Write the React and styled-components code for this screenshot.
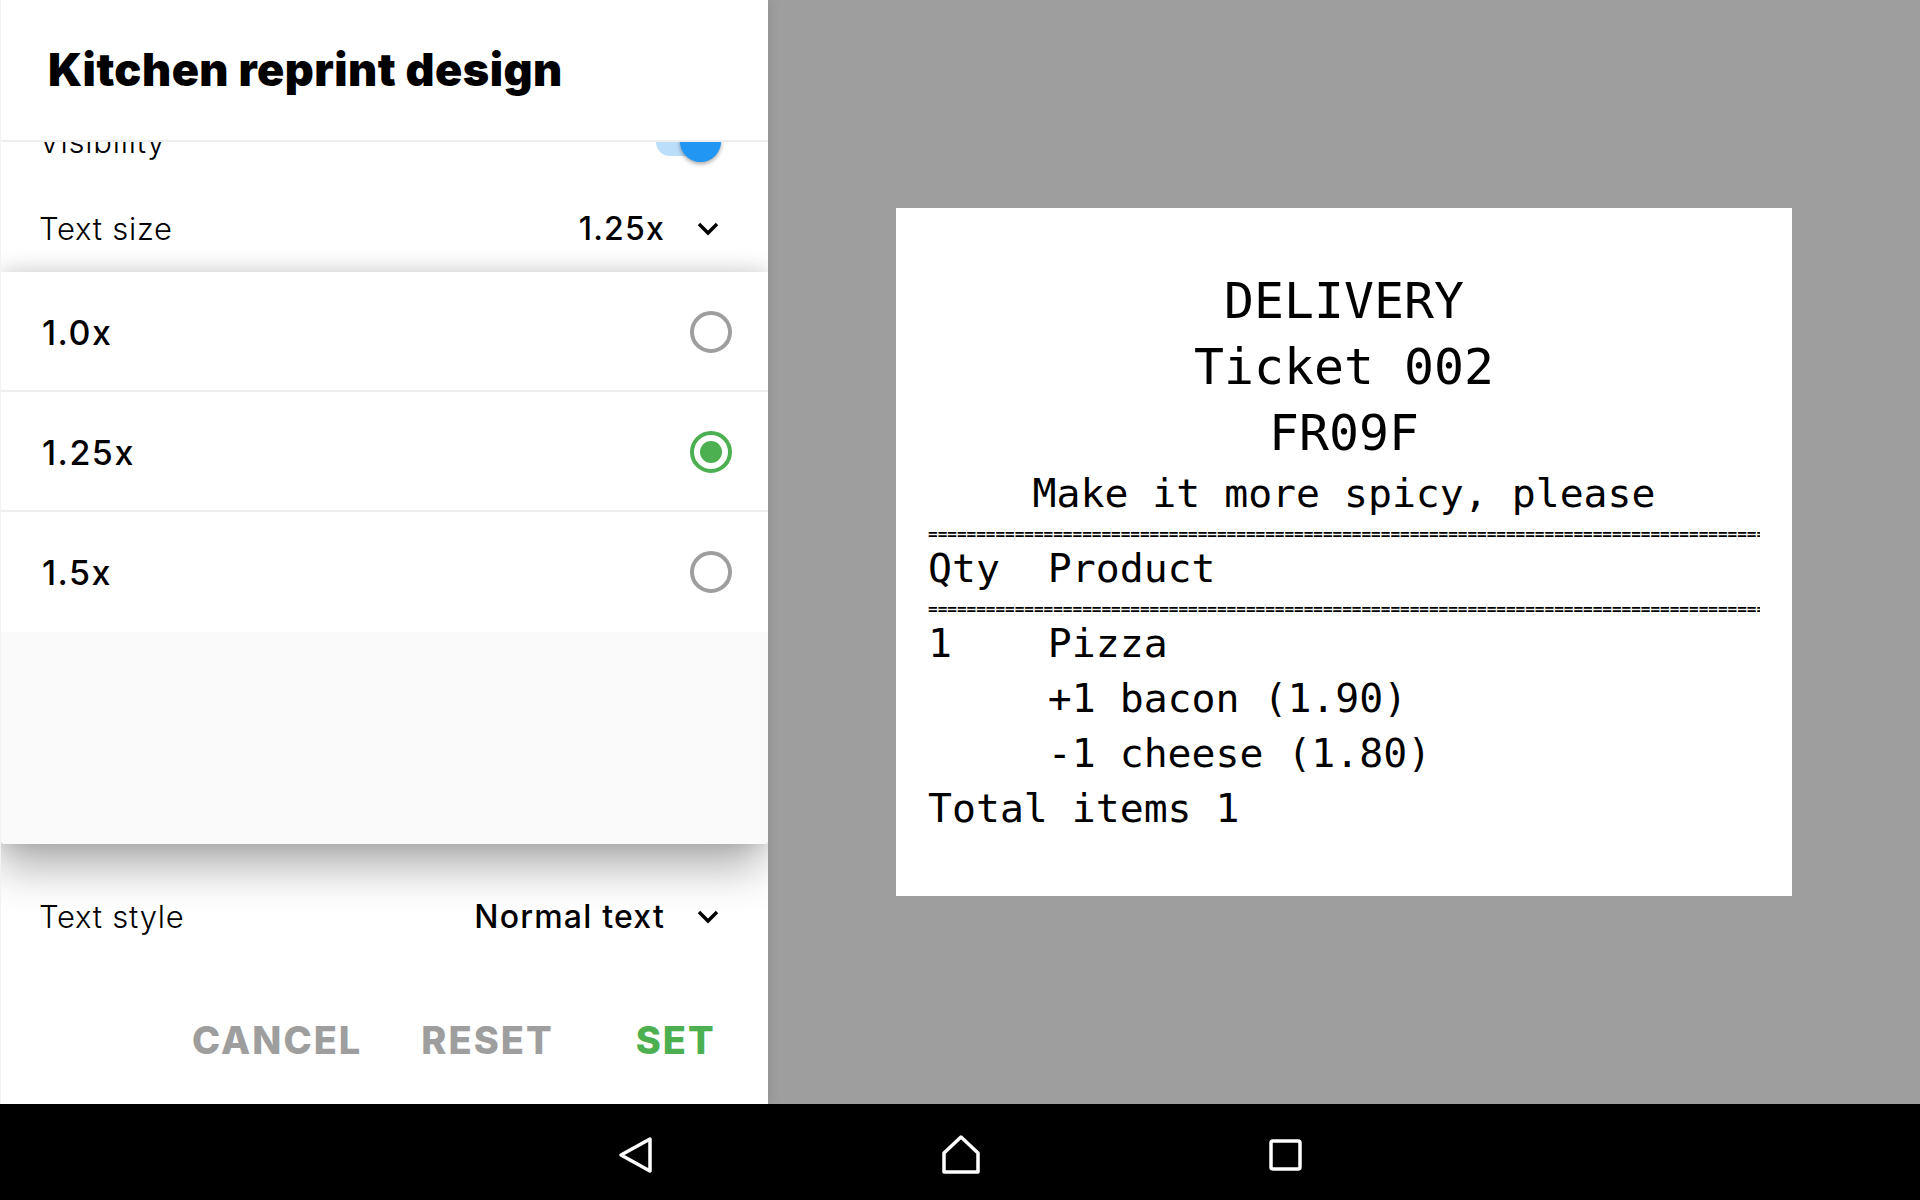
import React from 'react';
import styled, { createGlobalStyle } from 'styled-components';

const colorGray = "#9e9e9e";
const colorGreen = "#4caf50";
const colorBlue = "#2196f3";
const colorLine = "#eeeeee";

const GlobalStyle = createGlobalStyle`
  html, body {
    margin: 0;
    padding: 0;
    background: #000;
  }
  * {
    box-sizing: border-box;
  }
`;

const Screen = styled.div`
  width: 1920px;
  height: 1200px;
  display: flex;
  flex-direction: column;
  font-family: Inter, "Liberation Sans", sans-serif;
  color: #000;
  overflow: hidden;
`;

const Main = styled.main`
  height: 1104px;
  display: flex;
  background-color: ${colorGray};
`;

const Panel = styled.aside`
  width: 768px;
  display: flex;
  flex-direction: column;
  background-color: #fff;
  border-left: 1px solid #f2f2f2;
  box-shadow: 0 0 12px rgba(0, 0, 0, 0.12);
  position: relative;
  z-index: 1;
`;

const Header = styled.header`
  height: 142px;
  flex: none;
  display: flex;
  align-items: center;
  padding: 0 0 2px 47px;
  background-color: #fff;
  border-bottom: 2px solid ${colorLine};
  position: relative;
  z-index: 2;
`;

const Title = styled.h1`
  margin: 0;
  font-size: 45px;
  font-weight: 900;
  letter-spacing: 0.45px;
`;

const Body = styled.div`
  flex: 1;
  min-height: 0;
  overflow: hidden;
`;

const Row = styled.div`
  height: 87px;
  display: flex;
  align-items: center;
  justify-content: space-between;
  padding: 0 49px 0 38px;
  font-size: 31px;
  font-weight: 300;
  letter-spacing: 0.75px;
  margin-top: ${props => props.$offset || 0}px;
`;

const Value = styled.div`
  display: flex;
  align-items: center;
  gap: 32px;
  font-size: 32px;
  font-weight: 500;
  letter-spacing: 1.2px;
`;

const Toggle = styled.span`
  width: 65px;
  height: 28px;
  margin-right: -2px;
  border-radius: 14px;
  background-color: #bbdefb;
  position: relative;
`;

const Thumb = styled.span`
  position: absolute;
  top: -7px;
  right: 0;
  width: 41px;
  height: 41px;
  border-radius: 50%;
  background-color: ${colorBlue};
  box-shadow: 0 2px 4px rgba(0, 0, 0, 0.35);
`;

const Sheet = styled.div`
  height: 572px;
  display: flex;
  flex-direction: column;
  background-color: #fafafa;
  border-radius: 0 0 3px 3px;
  position: relative;
  box-shadow: -4px 26px 44px -2px rgba(0, 0, 0, 0.3), 0 -2px 22px rgba(0, 0, 0, 0.16);
`;

const Option = styled.div`
  height: 120px;
  display: flex;
  align-items: center;
  justify-content: space-between;
  padding: ${props => props.$last ? "0" : "2px"} 36px 0 41px;
  background-color: #fff;
  border-bottom: ${props => props.$last ? "none" : `2px solid ${colorLine}`};
  font-size: 34px;
  font-weight: 500;
  letter-spacing: 1.5px;
`;

const Radio = styled.span`
  width: 42px;
  height: 42px;
  border-radius: 50%;
  border: 4px solid ${props => props.$checked ? colorGreen : colorGray};
  display: flex;
  align-items: center;
  justify-content: center;

  &::after {
    content: "";
    display: ${props => props.$checked ? "block" : "none"};
    width: 22px;
    height: 22px;
    border-radius: 50%;
    background-color: ${colorGreen};
  }
`;

const Footer = styled.footer`
  height: 128px;
  flex: none;
  display: flex;
  align-items: center;
  padding-left: 191px;
`;

const Action = styled.button`
  padding: 0;
  border: none;
  background: none;
  font-family: inherit;
  font-size: 38px;
  font-weight: 800;
  letter-spacing: 2px;
  color: ${props => props.$primary ? colorGreen : colorGray};
  margin-right: ${props => props.$gap}px;
`;

const Preview = styled.section`
  flex: 1;
  display: flex;
  align-items: center;
  justify-content: center;
`;

const Receipt = styled.div`
  width: 896px;
  height: 688px;
  padding: 60px 32px 0;
  background-color: #fff;
  font-family: "DejaVu Sans Mono", monospace;
  white-space: pre;
`;

const BigLine = styled.div`
  font-size: 49.8px;
  line-height: 66px;
  text-align: center;
`;

const Note = styled.div`
  font-size: 39.8px;
  line-height: 55px;
  text-align: center;
`;

const Line = styled.div`
  font-size: 39.8px;
  line-height: 55px;
`;

const Rule = styled.div`
  height: 20px;
  font-size: 16px;
  font-weight: 700;
  line-height: 25px;
  overflow: hidden;
`;

const NavBar = styled.nav`
  height: 96px;
  flex: none;
  display: flex;
  align-items: center;
  justify-content: center;
  gap: 285px;
  padding-top: 6px;
  background-color: #000;
`;

const NavIcon = styled.svg`
  width: 40px;
  height: 40px;
  fill: none;
  stroke: #fff;
  stroke-width: 3.5;
  stroke-linejoin: round;
`;

const Chevron = () => (
  <svg width="22" height="14" viewBox="0 0 22 14" fill="none" stroke="#000" strokeWidth="3.4">
    <path d="M2 2 L11 11 L20 2" />
  </svg>
);

const RULE = "=".repeat(90);
const OPTIONS = ["1.0x", "1.25x", "1.5x"];

function App() {
  return (
    <Screen>
      <GlobalStyle />
      <Main>
        <Panel>
          <Header>
            <Title>Kitchen reprint design</Title>
          </Header>
          <Body>
            <Row $offset={-44}>
              Visibility
              <Toggle><Thumb /></Toggle>
            </Row>
            <Row>
              Text size
              <Value>1.25x <Chevron /></Value>
            </Row>
            <Sheet>
              {OPTIONS.map((option, i) => (
                <Option key={option} $last={i === OPTIONS.length - 1}>
                  {option}
                  <Radio $checked={option === "1.25x"} />
                </Option>
              ))}
            </Sheet>
            <Row $offset={29}>
              Text style
              <Value>Normal text <Chevron /></Value>
            </Row>
          </Body>
          <Footer>
            <Action $gap={59}>CANCEL</Action>
            <Action $gap={82}>RESET</Action>
            <Action $primary>SET</Action>
          </Footer>
        </Panel>
        <Preview>
          <Receipt>
            <BigLine>DELIVERY</BigLine>
            <BigLine>Ticket 002</BigLine>
            <BigLine>FR09F</BigLine>
            <Note>Make it more spicy, please</Note>
            <Rule>{RULE}</Rule>
            <Line>{"Qty  Product"}</Line>
            <Rule>{RULE}</Rule>
            <Line>{"1    Pizza"}</Line>
            <Line>{"     +1 bacon (1.90)"}</Line>
            <Line>{"     -1 cheese (1.80)"}</Line>
            <Line>{"Total items 1"}</Line>
          </Receipt>
        </Preview>
      </Main>
      <NavBar>
        <NavIcon viewBox="0 0 40 40"><path d="M35 4 L6 20 L35 36 Z" /></NavIcon>
        <NavIcon viewBox="0 0 40 40"><path d="M21 2 L38 18 L38 37 L4 37 L4 18 Z" /></NavIcon>
        <NavIcon viewBox="0 0 40 40"><rect x="6" y="6" width="29" height="28" rx="2" /></NavIcon>
      </NavBar>
    </Screen>
  );
}

export default App;
